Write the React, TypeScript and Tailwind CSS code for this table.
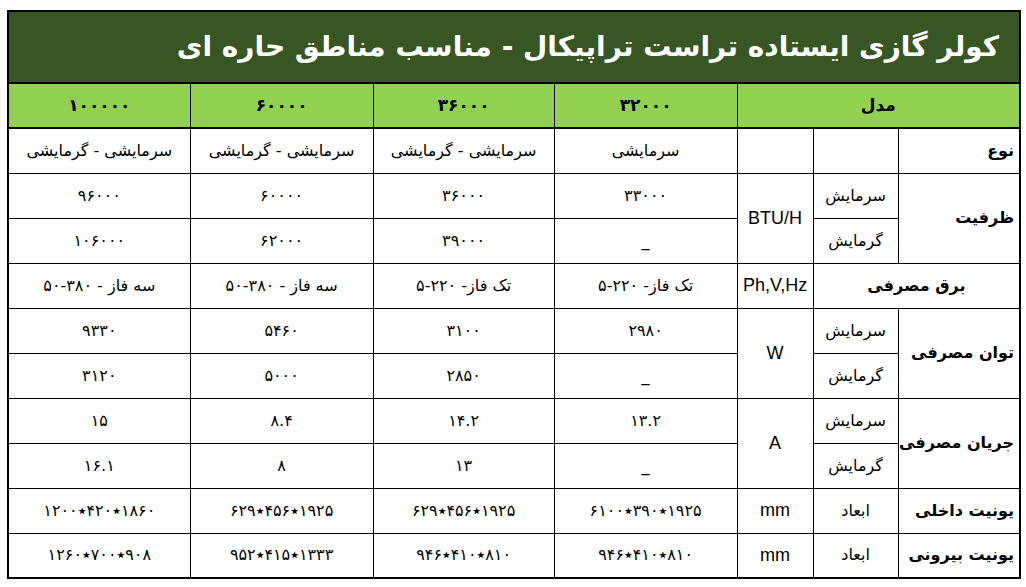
const fa = "font-['Tahoma','DejaVu_Sans','Noto_Sans',sans-serif]";

type Row = {
  label?: string;
  labelSpan?: number;
  sub?: string;
  unit?: string;
  unitSpan?: number;
  values: string[];
  labelColSpan?: number;
};

const rows: Row[] = [
  { label: "نوع", sub: "", unit: "", values: ["سرمایشی", "سرمایشی - گرمایشی", "سرمایشی - گرمایشی", "سرمایشی - گرمایشی"] },
  { label: "ظرفیت", labelSpan: 2, sub: "سرمایش", unit: "BTU/H", unitSpan: 2, values: ["۳۳۰۰۰", "۳۶۰۰۰", "۶۰۰۰۰", "۹۶۰۰۰"] },
  { sub: "گرمایش", values: ["_", "۳۹۰۰۰", "۶۲۰۰۰", "۱۰۶۰۰۰"] },
  { label: "برق مصرفی", labelColSpan: 2, unit: "Ph,V,Hz", values: ["تک فاز- ۲۲۰-۵", "تک فاز- ۲۲۰-۵", "سه فاز - ۳۸۰-۵۰", "سه فاز - ۳۸۰-۵۰"] },
  { label: "توان مصرفی", labelSpan: 2, sub: "سرمایش", unit: "W", unitSpan: 2, values: ["۲۹۸۰", "۳۱۰۰", "۵۴۶۰", "۹۳۳۰"] },
  { sub: "گرمایش", values: ["_", "۲۸۵۰", "۵۰۰۰", "۳۱۲۰"] },
  { label: "جریان مصرفی", labelSpan: 2, sub: "سرمایش", unit: "A", unitSpan: 2, values: ["۱۳.۲", "۱۴.۲", "۸.۴", "۱۵"] },
  { sub: "گرمایش", values: ["_", "۱۳", "۸", "۱۶.۱"] },
  { label: "یونیت داخلی", sub: "ابعاد", unit: "mm", values: ["۱۹۲۵٭۳۹۰٭۶۱۰۰", "۱۹۲۵٭۴۵۶٭۶۲۹", "۱۹۲۵٭۴۵۶٭۶۲۹", "۱۸۶۰٭۴۲۰٭۱۲۰۰"] },
  { label: "یونیت بیرونی", sub: "ابعاد", unit: "mm", values: ["۸۱۰٭۴۱۰٭۹۴۶", "۸۱۰٭۴۱۰٭۹۴۶", "۱۳۳۳٭۴۱۵٭۹۵۲", "۹۰۸٭۷۰۰٭۱۲۶۰"] },
];

const models = ["۳۲۰۰۰", "۳۶۰۰۰", "۶۰۰۰۰", "۱۰۰۰۰۰"];

export default function App() {
  return (
    <div className="min-h-[587px] w-[1026px] bg-white pl-[7px] pt-[10px]">
      <table dir="rtl" className={`w-[1012px] table-fixed border-collapse border-2 border-black text-black ${fa}`}>
        <colgroup>
          <col className="w-[122px]" />
          <col className="w-[85px]" />
          <col className="w-[76px]" />
          <col className="w-[183px]" />
          <col className="w-[181px]" />
          <col className="w-[183px]" />
          <col className="w-[182px]" />
        </colgroup>
        <tbody>
          <tr className="h-[72px]">
            <td colSpan={7} className="border-b-2 border-black bg-[#375623] px-[20px] text-right text-[28px] font-bold text-white">
              کولر گازی ایستاده تراست تراپیکال - مناسب مناطق حاره ای
            </td>
          </tr>
          <tr className="h-[45px] bg-[#92d050] text-[17px] font-bold">
            <td colSpan={3} className="border-b-2 border-l border-black text-center">مدل</td>
            {models.map((m) => (
              <td key={m} className="border-b-2 border-l border-black text-center">{m}</td>
            ))}
          </tr>
          {rows.map((r, i) => (
            <tr key={i} className="h-[45px]">
              {r.label !== undefined && (
                <td
                  rowSpan={r.labelSpan}
                  colSpan={r.labelColSpan}
                  className={`whitespace-nowrap border border-black text-[16px] font-bold ${r.labelColSpan ? "text-center" : "pr-[5px] text-right"}`}
                >
                  {r.label}
                </td>
              )}
              {r.sub !== undefined && (
                <td className="whitespace-nowrap border border-black text-center text-[16px]">{r.sub}</td>
              )}
              {r.unit !== undefined && (
                <td rowSpan={r.unitSpan} className="whitespace-nowrap border border-black text-center font-['Liberation_Sans',sans-serif] text-[18px]">
                  {r.unit}
                </td>
              )}
              {r.values.map((v, j) => (
                <td key={j} className="whitespace-nowrap border border-black text-center text-[16px]">{v}</td>
              ))}
            </tr>
          ))}
        </tbody>
      </table>
    </div>
  );
}
